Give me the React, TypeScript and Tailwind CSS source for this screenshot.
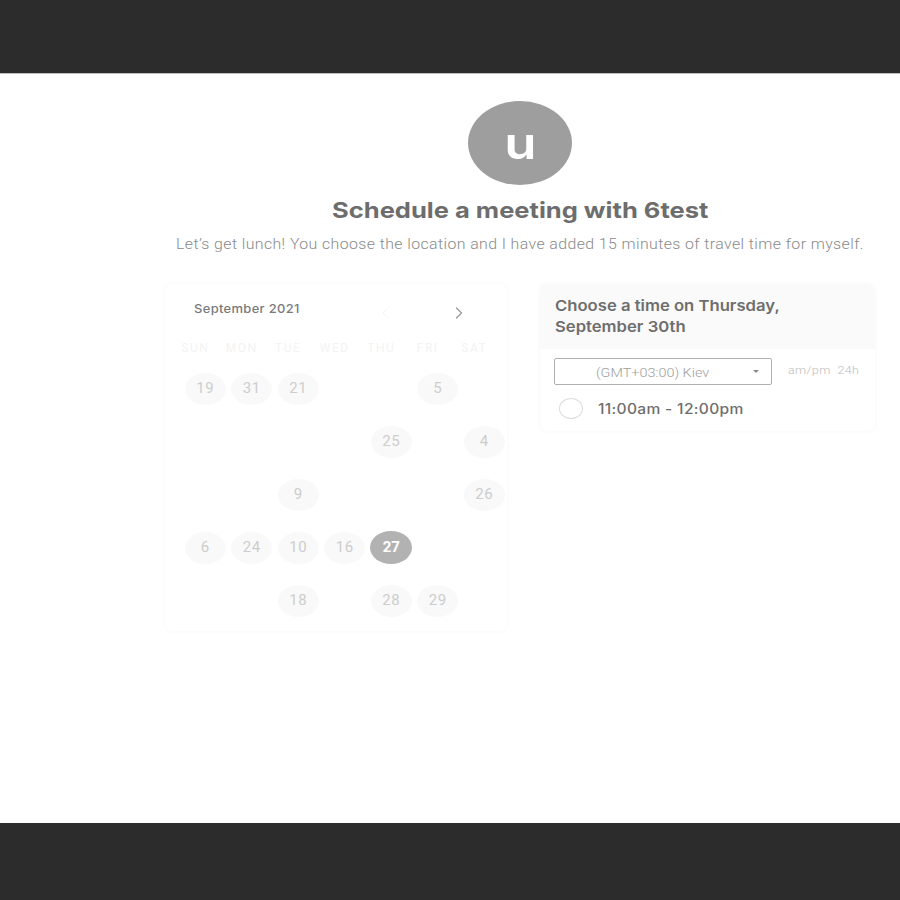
import { ChevronLeft, ChevronRight } from "lucide-react";

const weekdays = ["Sun", "Mon", "Tue", "Wed", "Thu", "Fri", "Sat"];

// grid of the month as it shows in the picture, empty cells are null
const weeks: (number | null)[][] = [
  [19, 31, 21, null, null, 5, null],
  [null, null, null, null, 25, null, 4],
  [null, null, 9, null, null, null, 26],
  [6, 24, 10, 16, 27, null, null],
  [null, null, 18, null, 28, 29, null],
];

const selectedDay = 27;

function DayCell({ day }: { day: number | null }) {
  if (day === null) return <div className="h-[53px]" />;
  const selected = day === selectedDay;
  return (
    <div className="flex h-[53px] items-center justify-center">
      <button
        className={
          selected
            ? "flex h-[33px] w-[42px] items-center justify-center rounded-[50%] bg-[#b2b2b2] text-[15px] font-bold text-white"
            : "flex h-[32px] w-[41px] items-center justify-center rounded-[50%] bg-[#f9f9f9] text-[15px] tracking-[0.5px] text-[#cdcdcd]"
        }
      >
        {day}
      </button>
    </div>
  );
}

export default function App() {
  return (
    <div className="flex min-h-[900px] flex-col bg-white font-['Roboto',sans-serif]">
      <div className="h-[74px] border-b border-[#bdbdbd] bg-[#2c2c2c]" />

      <main className="flex-1">
        <div className="ml-[165px] flex w-[710px] flex-col items-center pt-[27px]">
          <div className="flex h-[84px] w-[104px] items-center justify-center rounded-[50%] bg-[#9e9e9e]">
            <span className="inline-block scale-x-[1.2] font-['Inter',sans-serif] text-[44px] font-semibold leading-none text-white">u</span>
          </div>

          <h1 className="mt-[11px] scale-x-[1.16] font-['Inter',sans-serif] text-[22px] font-bold leading-[28px] text-[#6d6d6d]">
            Schedule a meeting with 6test
          </h1>
          <p className="mt-[10px] scale-x-[1.135] text-[14px] font-light leading-[20px] tracking-[0.35px] text-[#8a8a8a]">
            Let’s get lunch! You choose the location and I have added 15 minutes of travel time for myself.
          </p>

          <div className="mt-[30px] flex w-full items-start justify-between">
            {/* calendar */}
            <section className="h-[347px] w-[342px] rounded-lg bg-white pl-[17px] shadow-[0_0_5px_rgba(0,0,0,0.035)]">
              <div className="flex h-[43px] items-end justify-between pr-[38px]">
                <span className="mb-[9px] ml-[12px] inline-block origin-left scale-x-[1.08] font-['Inter',sans-serif] text-[12px] font-medium tracking-[0.3px] text-[#7a7a7a]">
                  September 2021
                </span>
                <div className="mb-[4px] flex items-center gap-[56px]">
                  <ChevronLeft className="h-4 w-4 text-[#f3f3f3]" strokeWidth={1.5} />
                  <ChevronRight className="h-5 w-5 text-[#9a9a9a]" strokeWidth={1.5} />
                </div>
              </div>

              <div className="-ml-[10px] mt-[12px] grid grid-cols-[repeat(7,46.5px)]">
                {weekdays.map((d) => (
                  <div key={d} className="text-center text-[12px] uppercase tracking-[1.5px] text-[#f3f3f3]">
                    {d}
                  </div>
                ))}
              </div>

              <div className="mt-[5px] grid grid-cols-[repeat(7,46.5px)]">
                {weeks.flat().map((day, i) => (
                  <DayCell key={i} day={day} />
                ))}
              </div>
            </section>

            {/* times */}
            <section className="w-[335px] overflow-hidden rounded-lg bg-white shadow-[0_0_5px_rgba(0,0,0,0.045)]">
              <div className="bg-[#fafafa] px-[15px] pb-[12px] pt-[11px]">
                <h2 className="origin-left scale-x-[1.11] font-['Inter',sans-serif] text-[15px] font-semibold leading-[21px] text-[#6e6e6e]">
                  Choose a time on Thursday,
                  <br />
                  September 30th
                </h2>
              </div>

              <div className="px-[14px] pb-[12px] pt-[9px]">
                <div className="flex items-center gap-[16px]">
                  <div className="flex h-[27px] w-[218px] items-center rounded-[2px] border border-[#b0b0b0] bg-white pl-[41px] pr-[12px]">
                    <span className="flex-1">
                      <span className="inline-block origin-left scale-x-[1.2] text-[12px] font-light text-[#a0a0a0]">(GMT+03:00) Kiev</span>
                    </span>
                    <span className="h-0 w-0 border-x-[3px] border-t-[3px] border-x-transparent border-t-[#8a8a8a]" />
                  </div>
                  <span className="inline-block origin-left scale-x-[1.14] text-[11px] font-light tracking-[0.3px] text-[#bdbdbd]">am/pm&nbsp; 24h</span>
                </div>

                <label className="mt-[13px] flex items-center gap-[15px] pl-[5px]">
                  <span className="h-[21px] w-[24px] rounded-[50%] border border-[#dcdcdc] bg-white" />
                  <span className="inline-block origin-left scale-x-[1.11] font-['Inter',sans-serif] text-[14px] font-medium tracking-[0.3px] text-[#6e6e6e]">
                    11:00am - 12:00pm
                  </span>
                </label>
              </div>
            </section>
          </div>
        </div>
      </main>

      <div className="h-[77px] bg-[#2c2c2c]" />
    </div>
  );
}
